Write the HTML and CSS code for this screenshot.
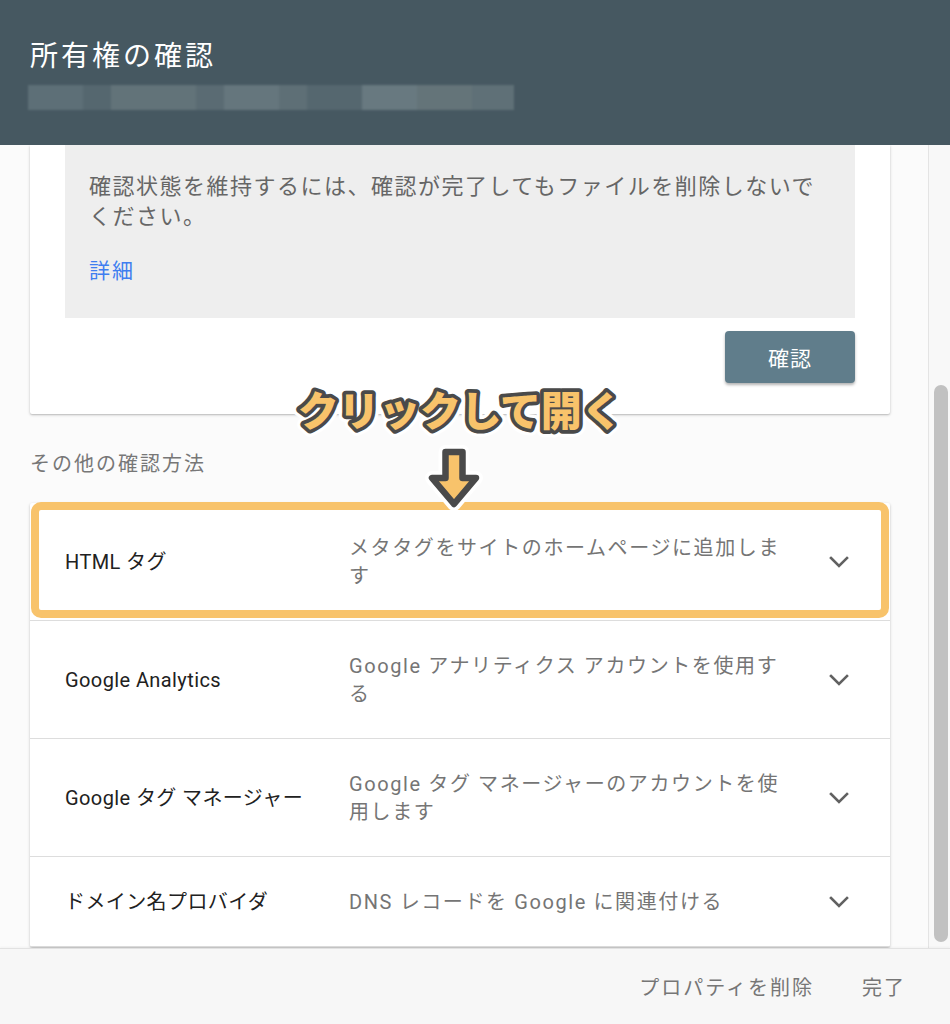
FILE: index.html
```html
<!DOCTYPE html>
<html lang="ja">
<head>
<meta charset="utf-8">
<title>所有権の確認</title>
<link rel="stylesheet" href="styles.css">
</head>
<body>
<div class="dialog">
  <header class="dlg-header">
    <h1 class="dlg-title">所有権の確認</h1>
    <div class="blur-bar">
      <span class="bb bb1"></span><span class="bb bb2"></span><span class="bb bb3"></span><span class="bb bb4"></span><span class="bb bb5"></span><span class="bb bb6"></span><span class="bb bb7"></span><span class="bb bb8"></span><span class="bb bb9"></span><span class="bb bb10"></span>
    </div>
  </header>

  <div class="dlg-body">
    <div class="scroll-area">
      <section class="card method-card">
        <div class="note-box">
          <p class="note-text">確認状態を維持するには、確認が完了してもファイルを削除しないでください。</p>
          <a class="note-link" href="#">詳細</a>
        </div>
        <div class="card-actions">
          <button class="btn-verify">確認</button>
        </div>
      </section>

      <h2 class="section-title">その他の確認方法</h2>

      <section class="card method-list">
        <div class="method-row is-highlighted">
          <div class="method-name">HTML タグ</div>
          <div class="method-desc">メタタグをサイトのホームページに追加します</div>
          <svg class="chevron" viewBox="0 0 20 12" width="20" height="12"><path d="M2 2 L10 10 L18 2" fill="none" stroke="#616161" stroke-width="2.6" stroke-linecap="square"/></svg>
          <div class="highlight-ring"></div>
        </div>
        <div class="method-row">
          <div class="method-name">Google Analytics</div>
          <div class="method-desc">Google アナリティクス アカウントを使用する</div>
          <svg class="chevron" viewBox="0 0 20 12" width="20" height="12"><path d="M2 2 L10 10 L18 2" fill="none" stroke="#616161" stroke-width="2.6" stroke-linecap="square"/></svg>
        </div>
        <div class="method-row">
          <div class="method-name">Google タグ マネージャー</div>
          <div class="method-desc">Google タグ マネージャーのアカウントを使用します</div>
          <svg class="chevron" viewBox="0 0 20 12" width="20" height="12"><path d="M2 2 L10 10 L18 2" fill="none" stroke="#616161" stroke-width="2.6" stroke-linecap="square"/></svg>
        </div>
        <div class="method-row">
          <div class="method-name">ドメイン名プロバイダ</div>
          <div class="method-desc">DNS レコードを Google に関連付ける</div>
          <svg class="chevron" viewBox="0 0 20 12" width="20" height="12"><path d="M2 2 L10 10 L18 2" fill="none" stroke="#616161" stroke-width="2.6" stroke-linecap="square"/></svg>
        </div>
      </section>
    </div>
    <div class="scrollbar"><div class="scroll-thumb"></div></div>
  </div>

  <footer class="dlg-footer">
    <button class="btn-text">プロパティを削除</button>
    <button class="btn-text">完了</button>
  </footer>
</div>

<div class="callout">
  <svg class="callout-text" width="380" height="76" viewBox="0 0 380 76">
    <text x="190" y="52" text-anchor="middle" class="ct ct-white">クリックして開く</text>
    <text x="190" y="52" text-anchor="middle" class="ct ct-dark">クリックして開く</text>
    <text x="190" y="52" text-anchor="middle" class="ct ct-fill">クリックして開く</text>
  </svg>
  <svg class="callout-arrow" width="64" height="70" viewBox="0 0 64 70">
    <path d="M23.5 9 H40.5 V35 H54 L32 61 L10 35 H23.5 Z" fill="none" stroke="#ffffff" stroke-width="14" stroke-linejoin="round"/>
    <path d="M23.5 9 H40.5 V35 H54 L32 61 L10 35 H23.5 Z" fill="#f8c36b" stroke="#4a4a4a" stroke-width="6.5" stroke-linejoin="round"/>
  </svg>
</div>
</body>
</html>
```

FILE: styles.css
```css
* { box-sizing: border-box; }

html, body {
  margin: 0;
  padding: 0;
  height: 100%;
}

body {
  font-family: Roboto, "Noto Sans CJK JP", "Noto Sans", sans-serif;
  background: #fbfbfb;
  color: #212121;
  position: relative;
  overflow: hidden;
}

.dialog {
  display: flex;
  flex-direction: column;
  height: 1024px;
}

/* header */
.dlg-header {
  height: 145px;
  flex: none;
  background: #465861;
  padding: 37px 0 0 30px;
  position: relative;
  z-index: 2;
}

.dlg-title {
  margin: 0;
  font-weight: 400;
  font-size: 28px;
  line-height: 40px;
  letter-spacing: 3px;
  color: #ffffff;
}

.blur-bar {
  display: flex;
  margin-top: 8px;
  margin-left: -2px;
  height: 25px;
  width: 486px;
  filter: blur(1px);
}

.bb { height: 100%; display: block; }
.bb1 { width: 55px; background: #5d6f77; }
.bb2 { width: 28px; background: #55676f; }
.bb3 { width: 85px; background: #627379; }
.bb4 { width: 28px; background: #5a6b73; }
.bb5 { width: 55px; background: #65767d; }
.bb6 { width: 28px; background: #5e6f76; }
.bb7 { width: 55px; background: #55676f; }
.bb8 { width: 55px; background: #687980; }
.bb9 { width: 55px; background: #647479; }
.bb10 { width: 42px; background: #5f7077; }

/* body */
.dlg-body {
  flex: 1;
  display: flex;
  overflow: hidden;
  min-height: 0;
}

.scroll-area {
  flex: 1;
  padding: 0 38px 0 30px;
  overflow: hidden;
}

.card {
  background: #ffffff;
  box-shadow: 0 1px 3px rgba(0, 0, 0, 0.22), 0 1px 1px rgba(0, 0, 0, 0.08);
  border-radius: 2px;
}

.method-card {
  padding: 0 35px 31px;
  border-radius: 0 0 2px 2px;
}

.note-box {
  background: #eeeeee;
  padding: 27px 24px 32px;
}

.note-text {
  margin: 0;
  font-size: 22px;
  line-height: 30px;
  letter-spacing: 1.5px;
  color: #666666;
}

.note-link {
  display: block;
  margin-top: 24px;
  font-size: 21px;
  line-height: 30px;
  letter-spacing: 2px;
  color: #3f7ef0;
  text-decoration: none;
}

.card-actions {
  display: flex;
  justify-content: flex-end;
  margin-top: 13px;
}

.btn-verify {
  width: 130px;
  height: 52px;
  border: none;
  border-radius: 4px;
  background: #607d8b;
  color: #ffffff;
  font-family: inherit;
  font-size: 21px;
  letter-spacing: 1px;
  box-shadow: 0 2px 3px rgba(0, 0, 0, 0.3);
}

.section-title {
  margin: 35px 0 24px;
  font-weight: 400;
  font-size: 20px;
  line-height: 30px;
  letter-spacing: 2px;
  color: #777777;
}

/* list */
.method-list {
  border-radius: 2px;
}

.method-row {
  position: relative;
  display: flex;
  align-items: center;
  padding: 31px 0 30px 35px;
  border-bottom: 1px solid #dddddd;
}

.method-name {
  width: 284px;
  flex: none;
  font-size: 20px;
  line-height: 28px;
  letter-spacing: 0.4px;
  color: #212121;
}

.method-desc {
  width: 448px;
  flex: none;
  font-size: 20px;
  line-height: 28px;
  letter-spacing: 1.6px;
  color: #757575;
}

.chevron {
  margin-left: 32px;
  flex: none;
}

.highlight-ring {
  position: absolute;
  left: 1px;
  right: 1px;
  top: -1px;
  bottom: 2px;
  border: 8px solid #f8c36b;
  border-radius: 10px;
  pointer-events: none;
}

/* scrollbar */
.scrollbar {
  width: 22px;
  flex: none;
  background: #f8f8f8;
  border-left: 1px solid #e4e4e4;
  padding: 240px 0 0 5px;
}

.scroll-thumb {
  width: 14px;
  height: 557px;
  background: #c1c1c1;
  border-radius: 7px;
}

/* footer */
.dlg-footer {
  height: 76px;
  flex: none;
  background: #f7f7f7;
  border-top: 1px solid #e2e2e2;
  box-shadow: 0 -1px 2px rgba(0, 0, 0, 0.04);
  display: flex;
  align-items: center;
  justify-content: flex-end;
  gap: 48px;
  padding: 0 44px 0 0;
  position: relative;
  z-index: 2;
}

.btn-text {
  background: none;
  border: none;
  padding: 0;
  font-family: inherit;
  font-size: 20px;
  letter-spacing: 2px;
  color: #767676;
}

/* annotation overlay */
.callout {
  position: absolute;
  left: 0;
  top: 0;
  width: 0;
  height: 0;
  z-index: 5;
}

.callout-text {
  position: absolute;
  left: 270px;
  top: 374px;
  overflow: visible;
}

.ct {
  font-family: "Noto Sans CJK JP", sans-serif;
  font-weight: 900;
  font-size: 41px;
  letter-spacing: -0.3px;
}

.ct-white { fill: #ffffff; stroke: #ffffff; stroke-width: 14px; stroke-linejoin: round; }
.ct-dark { fill: #4a4a4a; stroke: #4a4a4a; stroke-width: 7.5px; stroke-linejoin: round; }
.ct-fill { fill: #f8c36b; }

.callout-arrow {
  position: absolute;
  left: 422px;
  top: 443px;
}
```
